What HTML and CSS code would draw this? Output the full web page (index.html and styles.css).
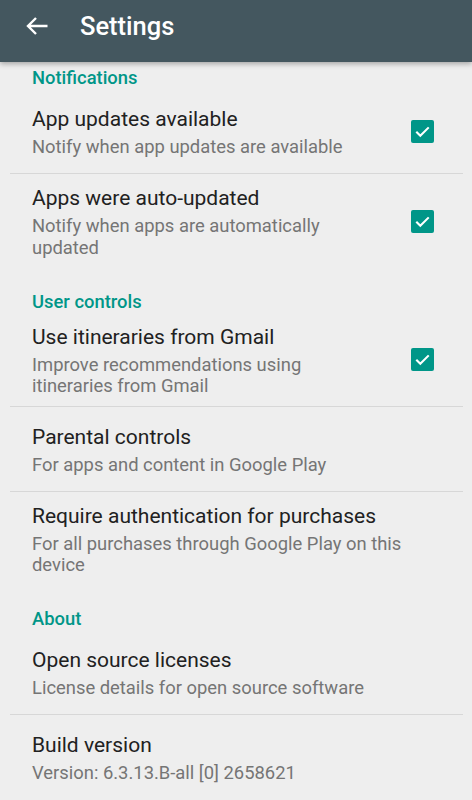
FILE: index.html
```html
<!DOCTYPE html>
<html>
<head>
<meta charset="utf-8">
<title>Settings</title>
<link rel="stylesheet" href="styles.css">
</head>
<body>
<div class="toolbar">
	<a href="javascript:;" class="back">
		<svg width="24" height="20" viewBox="0 0 24 20"><path d="M22.5 10H3M11 2L3 10l8 8" fill="none" stroke="#fff" stroke-width="2.4"/></svg>
	</a>
	<h1>Settings</h1>
</div>
<div class="list">
	<div class="cat first">Notifications</div>
	<div class="item line">
		<div class="text">
			<div class="title">App updates available</div>
			<div class="sub">Notify when app updates are available</div>
		</div>
		<span class="check"><svg width="23" height="23" viewBox="0 0 24 24"><path d="M5.5 12.3l4.2 4.2 8.8-8.8" fill="none" stroke="#fff" stroke-width="2.2"/></svg></span>
	</div>
	<div class="item">
		<div class="text">
			<div class="title">Apps were auto-updated</div>
			<div class="sub">Notify when apps are automatically updated</div>
		</div>
		<span class="check"><svg width="23" height="23" viewBox="0 0 24 24"><path d="M5.5 12.3l4.2 4.2 8.8-8.8" fill="none" stroke="#fff" stroke-width="2.2"/></svg></span>
	</div>

	<div class="cat">User controls</div>
	<div class="item line">
		<div class="text">
			<div class="title">Use itineraries from Gmail</div>
			<div class="sub">Improve recommendations using itineraries from Gmail</div>
		</div>
		<span class="check"><svg width="23" height="23" viewBox="0 0 24 24"><path d="M5.5 12.3l4.2 4.2 8.8-8.8" fill="none" stroke="#fff" stroke-width="2.2"/></svg></span>
	</div>
	<div class="item line">
		<div class="text">
			<div class="title">Parental controls</div>
			<div class="sub">For apps and content in Google Play</div>
		</div>
	</div>
	<div class="item">
		<div class="text">
			<div class="title">Require authentication for purchases</div>
			<div class="sub">For all purchases through Google Play on this device</div>
		</div>
	</div>

	<div class="cat">About</div>
	<div class="item line">
		<div class="text">
			<div class="title">Open source licenses</div>
			<div class="sub">License details for open source software</div>
		</div>
	</div>
	<div class="item">
		<div class="text">
			<div class="title">Build version</div>
			<div class="sub">Version: 6.3.13.B-all [0] 2658621</div>
		</div>
	</div>
</div>
</body>
</html>
```

FILE: styles.css
```css
*{ margin:0; padding:0; box-sizing:border-box;}
body{ background:#eeeeee; font-family:Roboto, "Noto Sans", sans-serif; width:472px; height:800px; overflow:hidden;}
.toolbar{ height:62px; background:#44575f; display:flex; align-items:flex-start; padding-top:11px; position:relative; z-index:1; box-shadow:0 2px 5px rgba(0,0,0,0.3);}
.back{ display:flex; width:24px; height:20px; margin:5px 0 0 25px;}
.toolbar h1{ color:#fff; font-size:25.5px; font-weight:500; line-height:30px; margin-left:31px;}
.cat{ color:#009688; font-size:18.4px; font-weight:500; line-height:23px; padding:21.5px 0 0 32px;}
.cat.first{ padding-top:4px;}
.item{ min-height:85px; padding:10px 20px 10px 32px; display:flex; align-items:center; position:relative;}
.item.line::after{ content:""; position:absolute; left:10px; right:9px; bottom:0; height:1px; background:#d7d7d7;}
.text{ flex:1;}
.title{ color:#212121; font-size:21px; line-height:28px;}
.sub{ color:#757575; font-size:18.4px; line-height:21.5px; margin-top:3px;}
.check{ width:23px; height:23px; border-radius:2px; background:#009688; margin:0 18px 0 28px; display:flex; flex-shrink:0;}
```
